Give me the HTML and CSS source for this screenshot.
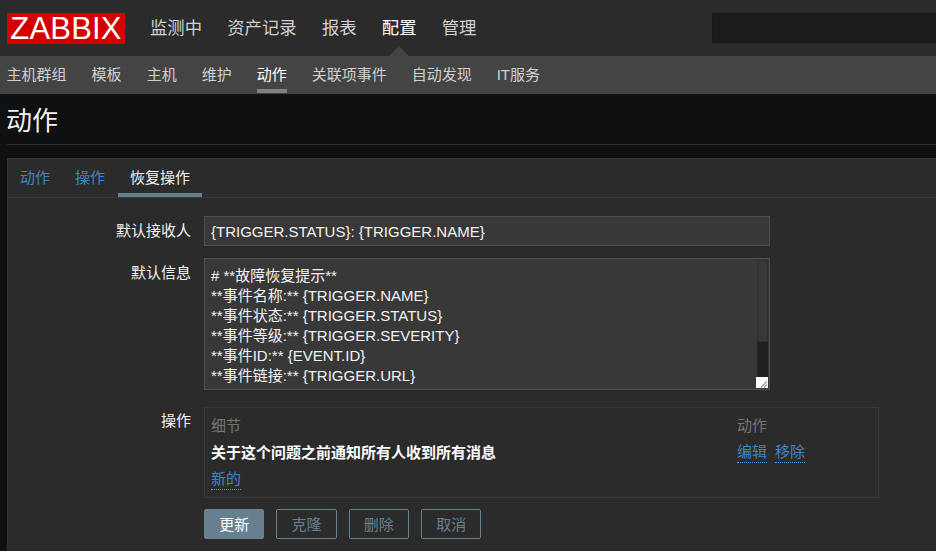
FILE: index.html
```html
<!DOCTYPE html>
<html lang="zh-CN">
<head>
<meta charset="utf-8">
<title>动作</title>
<link rel="stylesheet" href="styles.css">
</head>
<body>
<header class="topbar">
  <div class="logo">ZABBIX</div>
  <nav class="mainnav">
    <a>监测中</a><a>资产记录</a><a>报表</a><a class="on">配置</a><a>管理</a>
  </nav>
  <div class="search"></div>
</header>
<nav class="subnav">
  <a>主机群组</a><a>模板</a><a>主机</a><a>维护</a><a class="on">动作</a><a>关联项事件</a><a>自动发现</a><a>IT服务</a>
</nav>
<div class="titlebar"><h1>动作</h1></div>
<main class="card">
  <div class="tabs">
    <a>动作</a><a>操作</a><a class="on">恢复操作</a>
  </div>
  <div class="form">
    <div class="row r-subject">
      <label>默认接收人</label>
      <div class="input">{TRIGGER.STATUS}: {TRIGGER.NAME}</div>
    </div>
    <div class="row r-message">
      <label>默认信息</label>
      <div class="textarea">
        <div class="tatext"># **故障恢复提示**<br>**事件名称:** {TRIGGER.NAME}<br>**事件状态:** {TRIGGER.STATUS}<br>**事件等级:** {TRIGGER.SEVERITY}<br>**事件ID:** {EVENT.ID}<br>**事件链接:** {TRIGGER.URL}</div>
        <div class="scroll">
          <div class="thumb"></div>
          <div class="track"></div>
          <svg class="grip" width="12" height="11" viewBox="0 0 12 11"><rect width="12" height="11" fill="#fff"/><path d="M5 10h1M6 9h1M7 8h1M8 7h1M9 6h1M10 5h1M8 10h1M9 9h1M10 8h1" stroke="#555" stroke-width="1"/></svg>
        </div>
      </div>
    </div>
    <div class="row r-ops">
      <label>操作</label>
      <div class="opsbox">
        <div class="opsline opshead"><span class="col1">细节</span><span>动作</span></div>
        <div class="opsline"><strong class="col1">关于这个问题之前通知所有人收到所有消息</strong><span class="col2"><a class="lnk">编辑</a><a class="lnk">移除</a></span></div>
        <div class="opsline"><a class="lnk">新的</a></div>
      </div>
    </div>
    <div class="buttons">
      <button class="primary">更新</button><button>克隆</button><button>删除</button><button>取消</button>
    </div>
  </div>
</main>
</body>
</html>
```
FILE: styles.css
```css
* { box-sizing: border-box; }
html, body { margin: 0; height: 551px; overflow: hidden; }
body {
  background: #0e1012;
  color: #f2f2f2;
  font-family: "Liberation Sans", "Noto Sans CJK SC", sans-serif;
  font-size: 15px;
}
.topbar {
  height: 56px;
  background: #2b2b2b;
  display: flex;
  align-items: flex-start;
  padding: 13px 0 0 7px;
  overflow: hidden;
}
.logo {
  width: 118px;
  height: 31px;
  flex: none;
  background: #d40000;
  color: #fff;
  font-size: 31px;
  line-height: 31px;
  text-align: center;
  letter-spacing: 0.2px;
}
.mainnav {
  display: flex;
  flex: none;
  gap: 25.3px;
  margin-left: 25px;
  font-size: 17.33px;
  line-height: 30px;
  color: #d0d0d0;
}
.mainnav a { white-space: nowrap; }
.mainnav .on { color: #fff; position: relative; }
.mainnav .on::after {
  content: "";
  position: absolute;
  left: 7.3px;
  top: 33px;
  border: 10px solid transparent;
  border-top: 0;
  border-bottom-color: #444;
}
.search {
  margin-left: 235.6px;
  width: 260px;
  height: 30px;
  flex: none;
  background: #1c1c1c;
  border: 1px solid #191919;
  border-left-width: 2px;
}
.subnav {
  height: 38px;
  background: #444;
  display: flex;
  gap: 25px;
  padding-left: 6.6px;
  color: #d0d0d0;
  line-height: 37px;
}
.subnav .on {
  color: #fff;
  height: 37px;
  border-bottom: 4px solid #808080;
}
.titlebar {
  height: 51px;
  margin-left: 7px;
  border-bottom: 1px solid #2e2e2e;
}
h1 {
  margin: 0 0 0 -1px;
  font-size: 26px;
  font-weight: 400;
  line-height: 54px;
  height: 50px;
  color: #f2f2f2;
}
.card {
  margin: 13px 0 0 7px;
  height: 400px;
  background: #2b2b2b;
  border-top: 1px solid #333;
  border-left: 1px solid #333;
}
.tabs {
  height: 39px;
  display: flex;
  border-bottom: 1px solid #383838;
  color: #3f85c5;
  line-height: 38px;
}
.tabs a { padding: 0 12px; }
.tabs a + a { margin-left: 1px; }
.tabs .on {
  height: 38px;
  margin-left: 1px;
  color: #f2f2f2;
  border-bottom: 4px solid #66808f;
}
.form { padding-top: 18px; }
.row { display: flex; }
.row label {
  width: 183px;
  flex: none;
  text-align: right;
  margin-right: 13px;
  color: #f2f2f2;
}
.r-subject { height: 30px; }
.r-subject label { line-height: 30px; }
.input {
  width: 566px;
  height: 30px;
  padding-left: 6px;
  background: #383838;
  border: 1px solid #4f4f4f;
  line-height: 30px;
}
.r-message { margin-top: 12px; }
.r-message label { line-height: 30px; }
.textarea {
  width: 566px;
  height: 132px;
  display: flex;
  background: #383838;
  border: 1px solid #4f4f4f;
  padding: 1px 1px 1px 0;
}
.tatext {
  flex: 1;
  padding: 6px 0 0 6px;
  line-height: 20px;
}
.scroll {
  width: 12px;
  flex: none;
  display: flex;
  flex-direction: column;
  align-items: flex-end;
}
.thumb {
  width: 11px;
  height: 83px;
  background: #383838;
  border: 1px solid #2e2e2e;
}
.track { width: 11px; height: 35px; background: #202020; }
.grip { display: block; flex: none; }
.r-ops { margin-top: 17px; }
.r-ops label { line-height: 28px; }
.opsbox {
  width: 675px;
  height: 91px;
  border: 1px solid #383838;
  padding: 6px 0 0 6px;
}
.opsline {
  display: flex;
  height: 27px;
  line-height: 24px;
}
.col1 { width: 526px; flex: none; }
.opsline strong { font-weight: 700; color: #fff; }
.opshead { color: #767676; }
.col2 { display: flex; gap: 8px; }
.lnk {
  color: #3f85c5;
  height: 22px;
  line-height: 22px;
  border-bottom: 1px dotted #3f9ae0;
}
.buttons {
  display: flex;
  gap: 12px;
  margin: 11px 0 0 196px;
}
button {
  width: 60.33px;
  height: 30px;
  padding: 0 0 2px;
  font: inherit;
  color: #66808f;
  background: transparent;
  border: 1px solid #66808f;
  border-radius: 2px;
}
.primary { color: #fff; background: #66808f; }
```
